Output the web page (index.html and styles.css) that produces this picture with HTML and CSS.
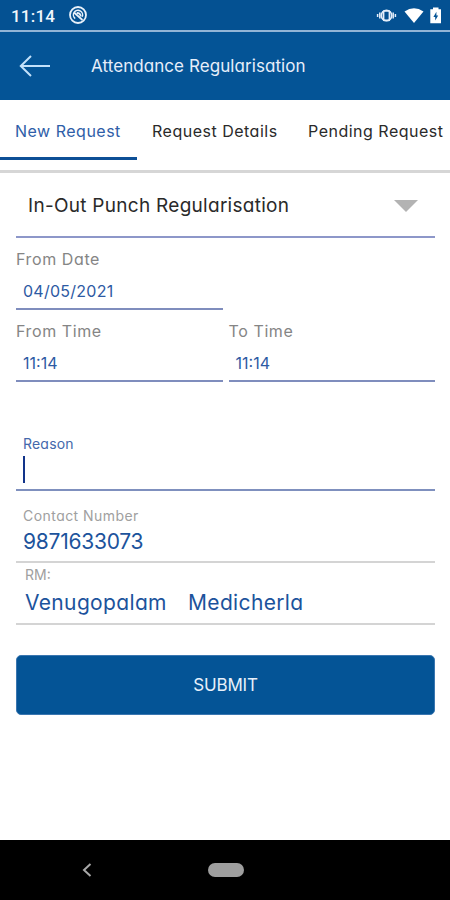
FILE: index.html
```html
<!DOCTYPE html>
<html lang="en">
<head>
    <meta charset="UTF-8">
    <meta name="viewport" content="width=device-width, initial-scale=1.0">
    <title>Attendance Regularisation</title>
    <link rel="stylesheet" href="styles.css">
</head>
<body>
    <div class="status-bar">
        <span class="clock">11:14</span>
        <svg class="app-icon" width="20" height="20" viewBox="0 0 20 20" fill="none" stroke="#e9f1fa">
            <circle cx="10" cy="10" r="8" stroke-width="1.8"/>
            <path d="M7.200 13.600A4.600 4.600 0 1 1 14.200 11.800" stroke-width="1.500"/>
            <path d="M6 7.500L14.500 15M8.800 7.800q3.500 0 4 3.500" stroke-width="1.800"/>
        </svg>
        <svg class="status-icons" width="66" height="20" viewBox="0 0 66 20">
            <g fill="none" stroke="#e4eefa">
                <circle cx="10.5" cy="10.5" r="5.3" stroke-width="1.5"/>
                <rect x="7.5" y="5.8" width="6" height="9.6" rx="1" stroke-width="1.8"/>
                <path d="M3.8 7.5v6M17.2 7.5v6M1.6 9v3M19.4 9v3" stroke-width="1.5"/>
            </g>
            <path d="M28.5 6.5Q38 -.2 47.5 6.5L38 18z" fill="#fff"/>
            <path d="M57 2.5h5.5v1.8H65v14H54.3v-14H57z" fill="#fff"/>
            <path d="M60.4 6.8l-3 5.2h1.8v3.600l3-5.200h-1.800z" fill="#045496"/>
        </svg>
    </div>

    <header class="header">
        <svg class="back" width="32" height="24" viewBox="0 0 32 24" fill="none" stroke="#c3e1fa" stroke-width="2">
            <path d="M31 12H2M12 2L1.8 12L12 22"/>
        </svg>
        <h1>Attendance Regularisation</h1>
    </header>

    <nav class="tabs">
        <a class="tab active">New Request</a>
        <a class="tab tab-details">Request Details</a>
        <a class="tab tab-pending">Pending Request</a>
    </nav>

    <main class="form">
        <div class="select">
            <span>In-Out Punch Regularisation</span>
            <svg width="24" height="12" viewBox="0 0 24 12"><path d="M0 0h24L12 12z" fill="#b3b3b3"/></svg>
        </div>

        <div class="row">
            <div class="field">
                <label>From Date</label>
                <div class="value date">04/05/2021</div>
            </div>
        </div>
        <div class="row">
            <div class="field">
                <label>From Time</label>
                <div class="value">11:14</div>
            </div>
            <div class="field">
                <label>To Time</label>
                <div class="value">11:14</div>
            </div>
        </div>

        <div class="reason">
            <label>Reason</label>
            <div class="caret"></div>
        </div>

        <div class="contact">
            <label>Contact Number</label>
            <div class="number">9871633073</div>
        </div>

        <div class="manager">
            <label>RM:</label>
            <div class="name"><span class="first">Venugopalam</span><span class="last">Medicherla</span></div>
        </div>

        <button class="submit">SUBMIT</button>
    </main>

    <footer class="nav-bar">
        <svg class="nav-back" width="10" height="14" viewBox="0 0 10 14" fill="none" stroke="#a8a8a8" stroke-width="2">
            <path d="M8.5 1L2 7l6.5 6"/>
        </svg>
        <div class="nav-home"></div>
    </footer>
</body>
</html>
```

FILE: styles.css
```css
* {
    box-sizing: border-box;
}

body {
    margin: 0;
    width: 450px;
    height: 900px;
    display: flex;
    flex-direction: column;
    overflow: hidden;
    background: #fff;
    color: #2a2a2a;
    font-family: Inter, "Open Sans", sans-serif;
    font-feature-settings: "cv11";
    font-size: 16px;
    white-space: nowrap;
}

.status-bar {
    height: 32px;
    flex: none;
    display: flex;
    align-items: center;
    padding: 0 8px 0 11px;
    background: #045192;
    border-bottom: 2px solid #93b5d6;
}

.clock {
    width: 57px;
    padding-top: 2px;
    color: #f2f7fc;
    font-family: Roboto, sans-serif;
    font-size: 17px;
    font-weight: 500;
    letter-spacing: 0.2px;
}

.status-icons {
    margin-left: auto;
}

.header {
    height: 68px;
    flex: none;
    display: flex;
    align-items: center;
    padding-left: 19px;
    background: #045496;
}

.header h1 {
    margin: 0 0 0 40px;
    color: #e6eefa;
    font-size: 17px;
    font-weight: 400;
    letter-spacing: 0.07px;
}

.tabs {
    height: 73px;
    flex: none;
    display: flex;
    align-items: flex-start;
    border-bottom: 3px solid #d6d6d6;
}

.tab {
    height: 60px;
    line-height: 62px;
    letter-spacing: 0.5px;
}

.active {
    width: 137px;
    padding-left: 15px;
    color: #2f5ea8;
    border-bottom: 3px solid #0d4f96;
}

.tab-details {
    width: 156px;
    padding-left: 15px;
}

.tab-pending {
    padding-left: 15px;
}

.form {
    flex: 1;
    padding: 0 15px 0 16px;
}

.select {
    height: 65px;
    display: flex;
    align-items: center;
    justify-content: space-between;
    padding: 2px 17px 0 12px;
    border-bottom: 2px solid #8d97c9;
    font-size: 19px;
    letter-spacing: 0.28px;
}

.row {
    display: flex;
    gap: 6px;
}

.field {
    width: 207px;
    height: 72px;
    padding-top: 9px;
    border-bottom: 2px solid #7f8dbd;
}

label {
    display: block;
    color: #858585;
}

.field label {
    line-height: 24px;
    letter-spacing: 0.6px;
}

.value {
    padding-left: 7px;
    color: #2d5aa3;
    line-height: 41px;
}

.date {
    letter-spacing: 0.25px;
}

.reason {
    height: 109px;
    padding: 52px 0 0 7px;
    border-bottom: 2px solid #7f90be;
}

.reason label {
    color: #4468ab;
    font-size: 14px;
    line-height: 20px;
    letter-spacing: 0.2px;
}

.caret {
    width: 2px;
    height: 27px;
    margin-top: 2px;
    background: #12348a;
}

.contact {
    height: 72px;
    padding: 15px 0 0 7px;
    border-bottom: 2px solid #d4d4d4;
}

.contact label,
.manager label {
    color: #a0a0a0;
    font-size: 14px;
    line-height: 20px;
}

.contact label {
    letter-spacing: 0.45px;
}

.number,
.name {
    color: #1c539c;
    font-size: 21px;
    line-height: 31px;
}

.number {
    letter-spacing: -0.25px;
}

.manager {
    height: 62px;
    padding: 2px 0 0 9px;
    border-bottom: 2px solid #d4d4d4;
}

.name {
    display: flex;
    line-height: 35px;
    letter-spacing: 0.35px;
}

.first {
    width: 163px;
}

.submit {
    display: block;
    width: 100%;
    height: 60px;
    margin-top: 30px;
    border: 1px solid #3a76b0;
    border-radius: 5px;
    background: #045496;
    color: #e8f0fa;
    font-family: inherit;
    font-size: 17px;
    letter-spacing: -0.2px;
}

.nav-bar {
    height: 60px;
    flex: none;
    display: flex;
    align-items: center;
    padding-left: 82px;
    background: #000;
}

.nav-home {
    width: 36px;
    height: 14px;
    margin-left: 116px;
    border-radius: 7px;
    background: #9e9e9e;
}
```
